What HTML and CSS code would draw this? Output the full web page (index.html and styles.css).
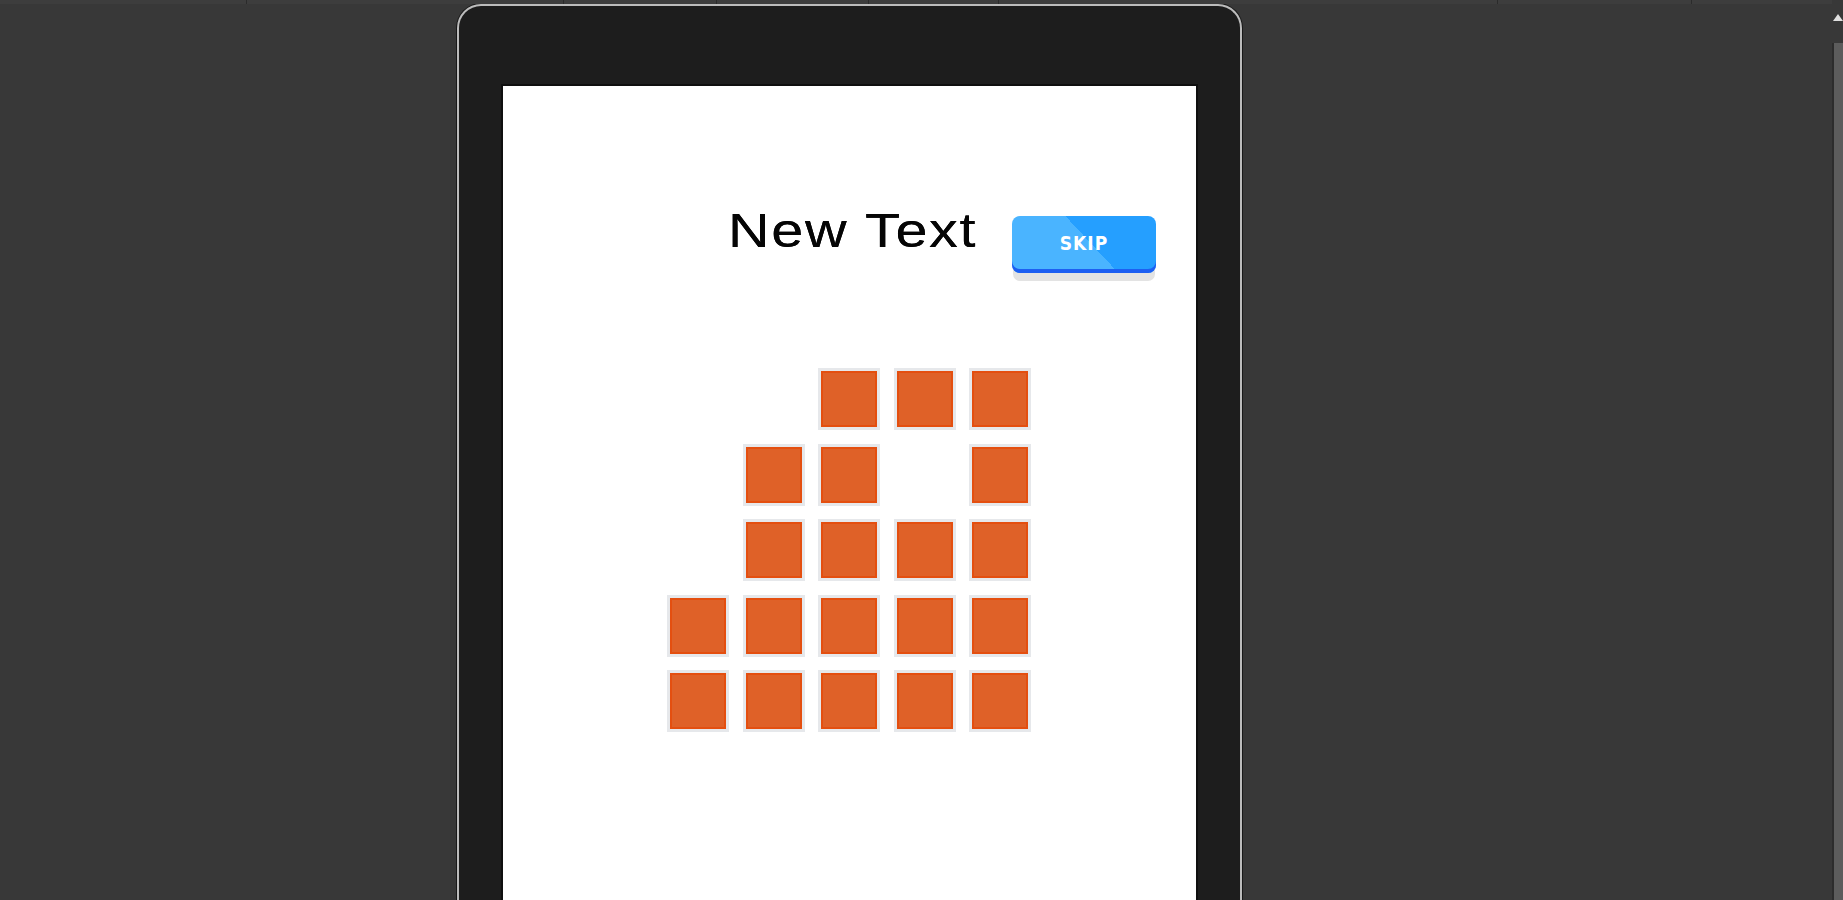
FILE: index.html
```html
<!DOCTYPE html>
<html lang="en">
<head>
    <meta charset="UTF-8">
    <meta name="viewport" content="width=device-width, initial-scale=1.0">
    <title>Game View</title>
    <link rel="stylesheet" href="styles.css">
</head>
<body>
    <div class="editor">
        <div class="main-area">
            <!-- thin toolbar strip along the top -->
            <div class="top-strip">
                <span class="seg seg-a"></span>
                <span class="seg seg-b"></span>
                <span class="seg seg-c"></span>
                <span class="seg seg-d"></span>
                <span class="seg seg-e"></span>
                <span class="seg seg-f"></span>
                <span class="seg seg-g"></span>
            </div>

            <div class="stage">
                <div class="phone">
                    <div class="screen">
                        <div class="header">
                            <h1 class="title">New Text</h1>
                            <button class="skip-button">SKIP</button>
                        </div>

                        <!-- Puzzle grid -->
                        <div class="grid">
                            <div class="cell empty"></div>
                            <div class="cell empty"></div>
                            <div class="cell tile"></div>
                            <div class="cell tile"></div>
                            <div class="cell tile"></div>

                            <div class="cell empty"></div>
                            <div class="cell tile"></div>
                            <div class="cell tile"></div>
                            <div class="cell empty"></div>
                            <div class="cell tile"></div>

                            <div class="cell empty"></div>
                            <div class="cell tile"></div>
                            <div class="cell tile"></div>
                            <div class="cell tile"></div>
                            <div class="cell tile"></div>

                            <div class="cell tile"></div>
                            <div class="cell tile"></div>
                            <div class="cell tile"></div>
                            <div class="cell tile"></div>
                            <div class="cell tile"></div>

                            <div class="cell tile"></div>
                            <div class="cell tile"></div>
                            <div class="cell tile"></div>
                            <div class="cell tile"></div>
                            <div class="cell tile"></div>
                        </div>
                    </div>
                </div>
            </div>
        </div>

        <!-- Scrollbar on the right edge -->
        <div class="scrollbar">
            <div class="scroll-arrow"></div>
            <div class="scroll-track"></div>
        </div>
    </div>
</body>
</html>
```

FILE: styles.css
```css
* {
    margin: 0;
    padding: 0;
    box-sizing: border-box;
}
body {
    background-color: #383838;
    font-family: "Liberation Sans", Arial, sans-serif;
    width: 1843px;
    height: 900px;
    overflow: hidden;
}
.editor {
    display: flex;
    height: 900px;
}
.main-area {
    flex: 1;
    display: flex;
    flex-direction: column;
}
.top-strip {
    display: flex;
    height: 4px;
    background-color: #3d3d3d;
}
.seg {
    height: 100%;
    border-right: 1px solid #2b2b2b;
}
.seg-a { width: 247px; }
.seg-b { width: 317px; }
.seg-c { width: 153px; }
.seg-d { width: 152px; }
.seg-e { width: 130px; }
.seg-f { width: 499px; }
.seg-g { width: 194px; }
.stage {
    flex: 1;
    padding-left: 457px;
    overflow: hidden;
}
.phone {
    width: 785px;
    height: 920px;
    padding: 80px 44px 0 44px;
    background-color: #1d1d1d;
    border: 2px solid #bcbcbc;
    border-bottom: none;
    border-radius: 24px 24px 0 0;
    box-shadow: 0 0 0 1px #191919;
}
.screen {
    width: 693px;
    height: 900px;
    background-color: #fff;
    padding-top: 121px;
    box-shadow: 0 0 0 2px #0f0f0f;
}
.header {
    display: flex;
    align-items: flex-start;
    padding: 0 40px 0 225px;
}
.title {
    font-size: 48px;
    line-height: 48px;
    font-weight: normal;
    letter-spacing: 1.4px;
    color: #050505;
    white-space: nowrap;
    transform: scaleX(1.2);
    transform-origin: left center;
    text-shadow: 0 0 0.6px #000;
}
.skip-button {
    margin-left: auto;
    margin-top: 9px;
    width: 144px;
    height: 57px;
    border: none;
    border-radius: 8px;
    background: linear-gradient(47deg, #4ab4ff 54%, #259fff 54%);
    box-shadow: inset 0 -4px 0 #1d5ff2, 0 9px 0 -1px #e3e3e3;
    color: #fff;
    font-family: "DejaVu Sans Condensed", "DejaVu Sans", sans-serif;
    font-weight: bold;
    font-size: 19px;
    letter-spacing: 1px;
    padding-bottom: 4px;
}
.grid {
    display: grid;
    grid-template-columns: repeat(5, 62px);
    grid-auto-rows: 62px;
    gap: 13.5px;
    margin: 95px 0 0 164px;
}
.tile {
    border: 3px solid #e6e8eb;
    background-color: #df6128;
    box-shadow: inset 0 0 0 2px #e44f10;
}
.scrollbar {
    width: 11px;
    display: flex;
    flex-direction: column;
    align-items: center;
}
.scroll-arrow {
    margin-top: 14px;
    width: 0;
    height: 0;
    border-left: 5px solid transparent;
    border-right: 5px solid transparent;
    border-bottom: 7px solid #e0e0e0;
}
.scroll-track {
    margin-top: 22px;
    flex: 1;
    width: 100%;
    background-color: #5c5c5c;
    border-left: 2px solid #2c2c2c;
}
```
